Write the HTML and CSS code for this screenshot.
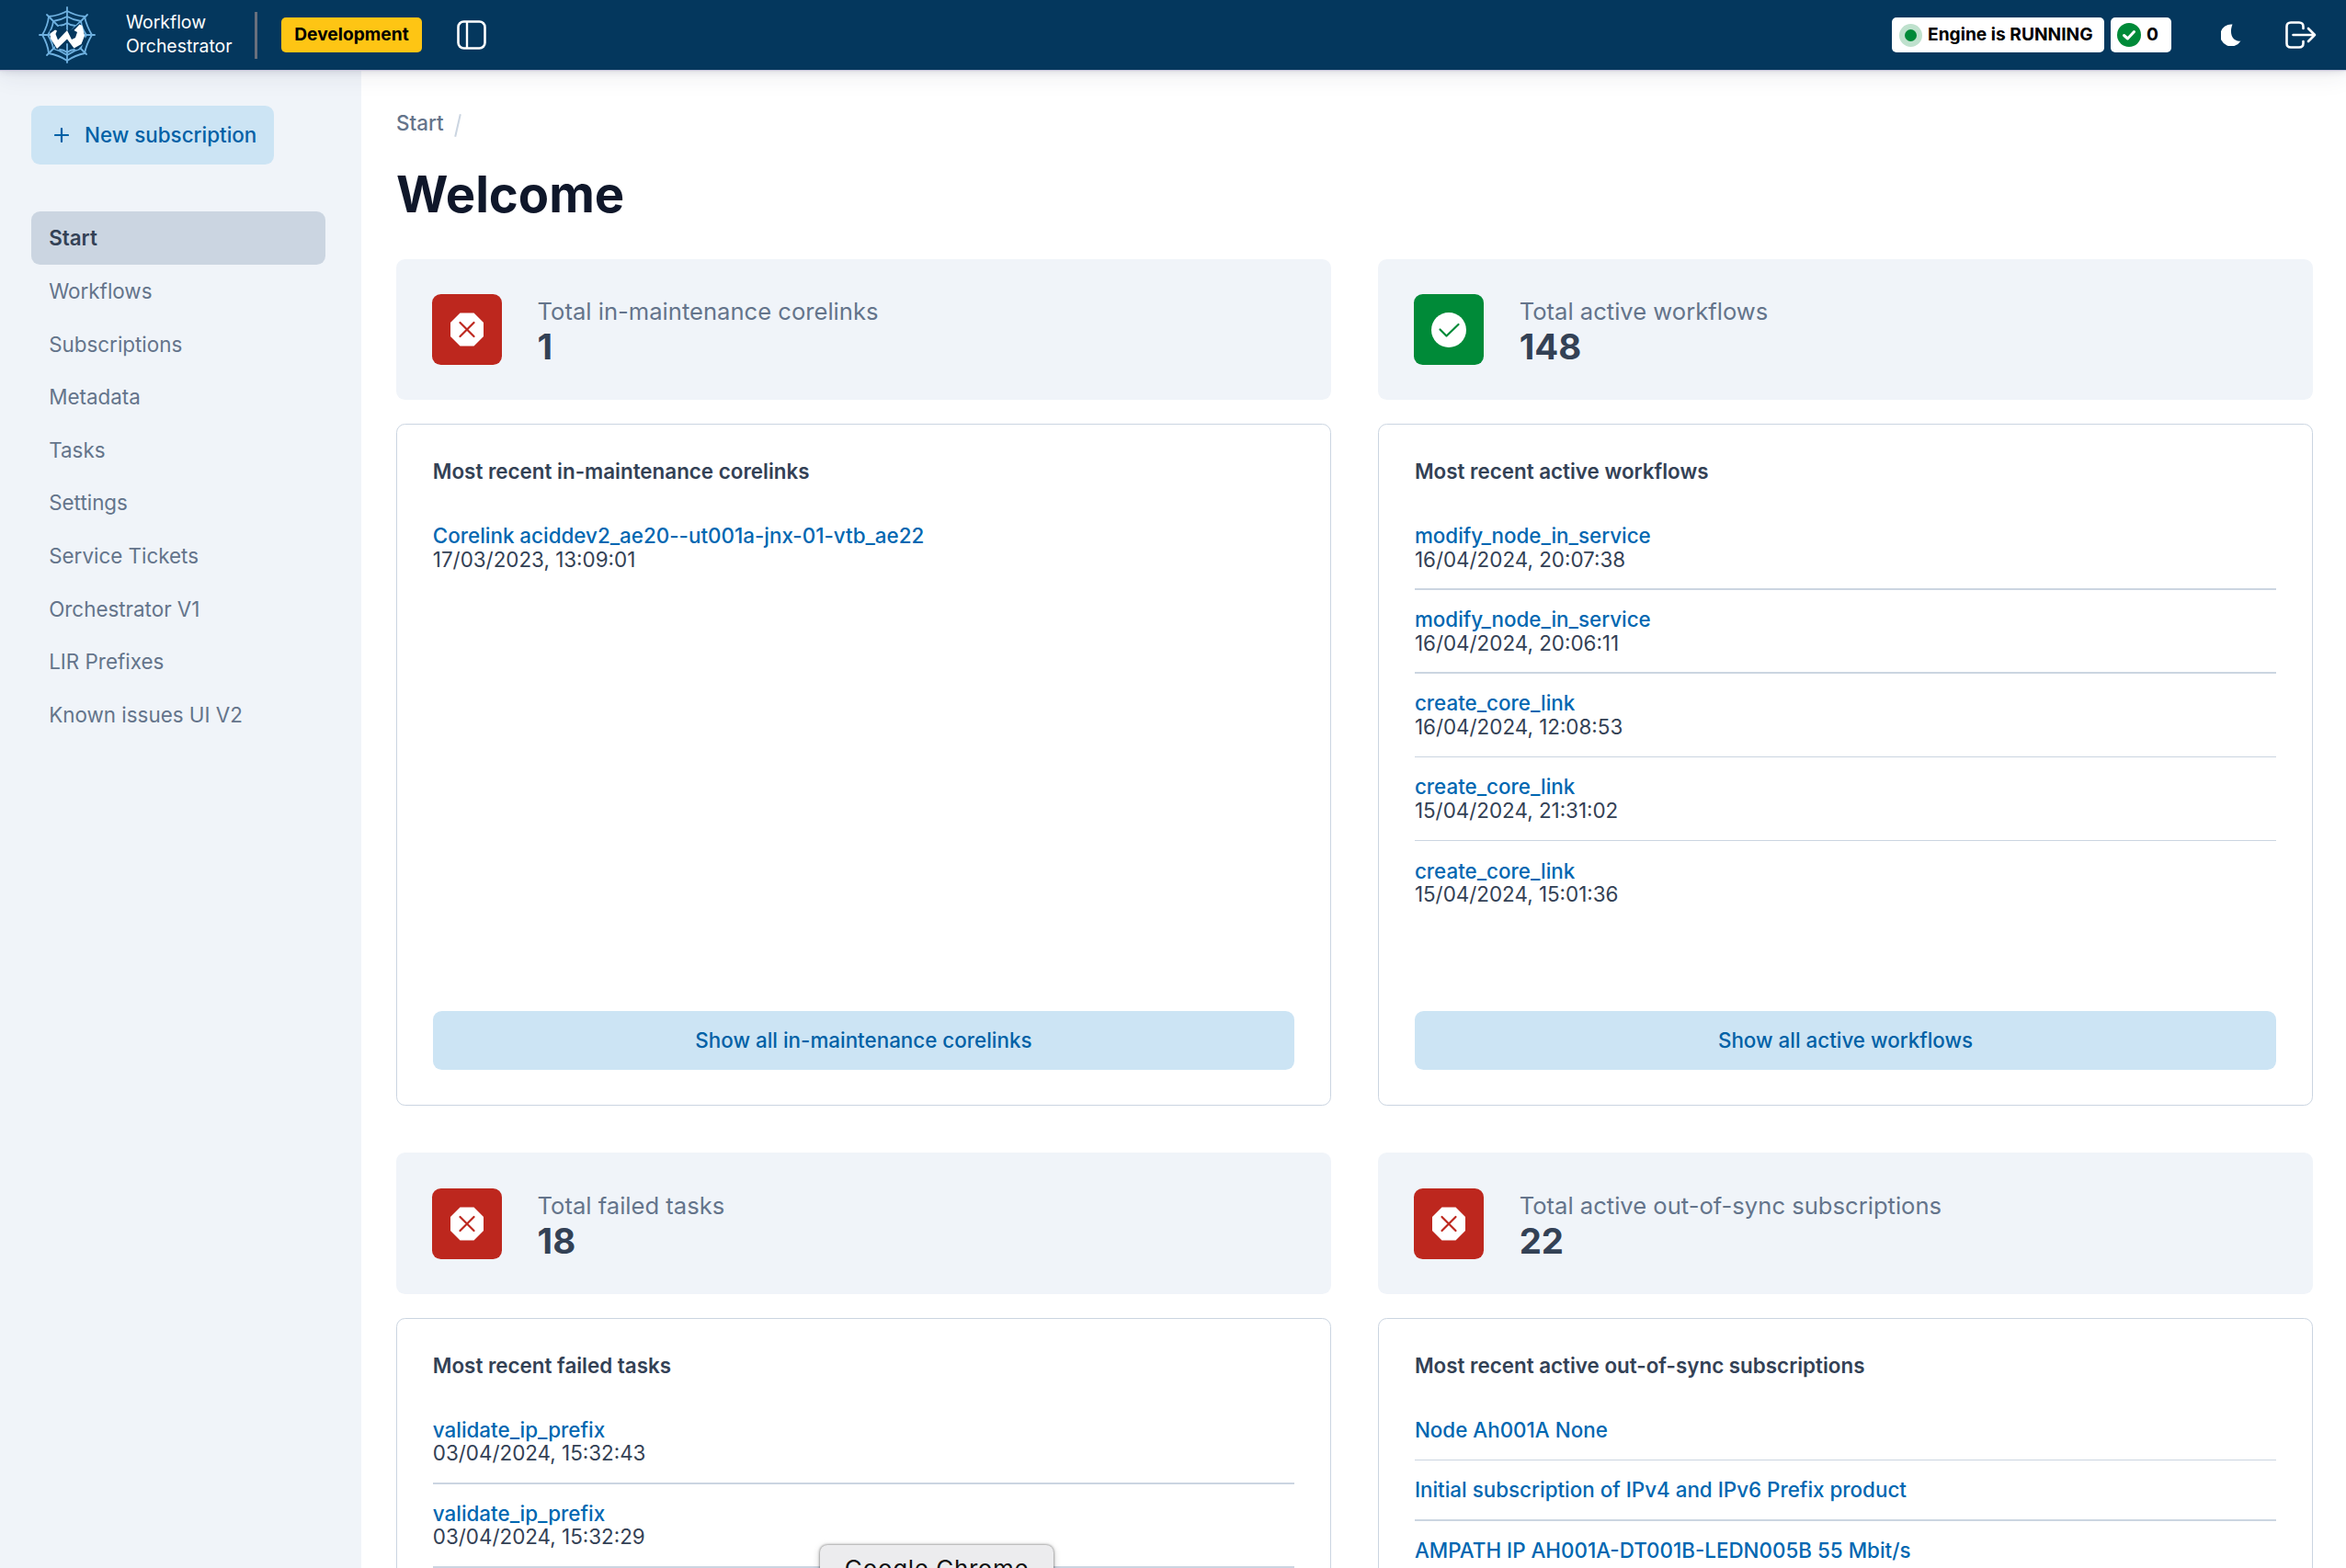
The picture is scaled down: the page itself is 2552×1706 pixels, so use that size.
FILE: index.html
```html
<!DOCTYPE html>
<html lang="en">
<head>
<meta charset="utf-8">
<title>Workflow Orchestrator</title>
<link rel="stylesheet" href="styles.css">
</head>
<body>
<header class="header">
  <svg class="logo" viewBox="0 0 62 62" fill="none" stroke="#6fb1e0" stroke-width="1.8" stroke-linecap="round">
    <path d="M31 1v60M1 31h60M9 9l43 43M53 9L9 53"/>
    <path d="M31 5Q40 10 50 11Q52 21 58 31Q52 41 50 51Q40 53 31 59Q22 53 11 51Q10 41 4 31Q10 21 11 11Q22 10 31 5z"/>
    <path d="M31 11Q38 15 46 16Q47 24 52 31Q47 39 46 46Q38 48 31 53Q24 48 16 46Q15 39 10 31Q15 24 16 16Q24 15 31 11z"/>
    <path d="M31 18q4 3 9 3M31 18q-4 3-9 3M31 50q4-3 8-3M31 50q-4-3-8-3"/>
    <path fill="#04375d" stroke="none" d="M12 27L23 21L33 27L45 18L52 38L42 47L31 40L19 47z"/>
    <path fill="#fff" stroke="none" d="M12.500 29.500L18 25.500L20 26.500L18.500 30L21 36.500L31 26L36 36L40 34L42 28L38.500 26L44.500 19.500L47.500 21L50 32L46.500 41L38.500 45.500L31 35.500L20 46L13 35z"/>
  </svg>
  <div class="brand">Workflow<br>Orchestrator</div>
  <div class="rule"></div>
  <div class="badge env">Development</div>
  <svg class="toggle" viewBox="0 0 32 32" fill="none" stroke="#fff"><rect x="1.500" y="1.500" width="29" height="29" rx="6" stroke-width="2.600"/><path d="M11 2v28" stroke-width="2.400"/></svg>
  <div class="tools">
    <div class="badge engine"><span class="pulse"></span>Engine is RUNNING</div>
    <div class="badge count"><svg viewBox="0 0 26 26"><circle cx="13" cy="13" r="13" fill="#008a38"/><path d="M7.500 13.500l4 3.500 7-7.500" fill="none" stroke="#fff" stroke-width="3" stroke-linecap="round" stroke-linejoin="round"/></svg>0</div>
    <svg class="moon" viewBox="0 0 22 24"><path d="M12.500 0.500A12 12 0 1 0 21.500 18.500C14 20 8 12 12.500 0.500z" fill="#fff"/></svg>
    <svg class="logout" viewBox="0 0 34 30" fill="none" stroke="#fff" stroke-width="2.600" stroke-linecap="round" stroke-linejoin="round"><path d="M19.500 8V6q0-4.500-4.500-4.500H6Q1.500 1.500 1.500 6v18q0 4.500 4.500 4.500h9q4.500 0 4.500-4.500v-2M8.500 15H32M25 8l7 7-7 7"/></svg>
  </div>
</header>
<div class="page">
  <aside class="sidebar">
    <a class="new"><svg viewBox="0 0 16 16" stroke="#0061a6" stroke-width="2.200" stroke-linecap="round"><path d="M8 1v14M1 8h14"/></svg>New subscription</a>
    <nav class="nav">
      <a class="active">Start</a><a>Workflows</a><a>Subscriptions</a><a>Metadata</a><a>Tasks</a><a>Settings</a><a>Service Tickets</a><a>Orchestrator V1</a><a>LIR Prefixes</a><a>Known issues UI V2</a>
    </nav>
  </aside>
  <main class="main">
    <div class="crumbs">Start<span class="slash"></span></div>
    <h1>Welcome</h1>
    <div class="grid">
      <section>
        <div class="stat"><div class="tile red"><svg viewBox="0 0 36 36"><path d="M10.500 0h15L36 10.500v15L25.500 36h-15L0 25.500v-15z" fill="#fff"/><path d="M10.500 10.500l15 15m0-15l-15 15" stroke="#bd271e" stroke-width="2.200" stroke-linecap="round"/></svg></div><div><p>Total in-maintenance corelinks</p><strong>1</strong></div></div>
        <div class="card">
          <h2>Most recent in-maintenance corelinks</h2>
          <ul><li><a>Corelink aciddev2_ae20--ut001a-jnx-01-vtb_ae22</a><time>17/03/2023, 13:09:01</time></li></ul>
          <a class="all">Show all in-maintenance corelinks</a>
        </div>
      </section>
      <section>
        <div class="stat"><div class="tile green"><svg viewBox="0 0 38 38"><circle cx="19" cy="19" r="19" fill="#fff"/><path d="M9.500 18.500l7 7L29.500 13" fill="none" stroke="#008a38" stroke-width="2.200" stroke-linecap="round" stroke-linejoin="round"/></svg></div><div><p>Total active workflows</p><strong>148</strong></div></div>
        <div class="card">
          <h2>Most recent active workflows</h2>
          <ul>
            <li><a>modify_node_in_service</a><time>16/04/2024, 20:07:38</time></li>
            <li><a>modify_node_in_service</a><time>16/04/2024, 20:06:11</time></li>
            <li><a>create_core_link</a><time>16/04/2024, 12:08:53</time></li>
            <li><a>create_core_link</a><time>15/04/2024, 21:31:02</time></li>
            <li><a>create_core_link</a><time>15/04/2024, 15:01:36</time></li>
          </ul>
          <a class="all">Show all active workflows</a>
        </div>
      </section>
      <section>
        <div class="stat"><div class="tile red"><svg viewBox="0 0 36 36"><path d="M10.500 0h15L36 10.500v15L25.500 36h-15L0 25.500v-15z" fill="#fff"/><path d="M10.500 10.500l15 15m0-15l-15 15" stroke="#bd271e" stroke-width="2.200" stroke-linecap="round"/></svg></div><div><p>Total failed tasks</p><strong>18</strong></div></div>
        <div class="card">
          <h2>Most recent failed tasks</h2>
          <ul>
            <li><a>validate_ip_prefix</a><time>03/04/2024, 15:32:43</time></li>
            <li><a>validate_ip_prefix</a><time>03/04/2024, 15:32:29</time></li>
            <li></li>
          </ul>
        </div>
      </section>
      <section>
        <div class="stat"><div class="tile red"><svg viewBox="0 0 36 36"><path d="M10.500 0h15L36 10.500v15L25.500 36h-15L0 25.500v-15z" fill="#fff"/><path d="M10.500 10.500l15 15m0-15l-15 15" stroke="#bd271e" stroke-width="2.200" stroke-linecap="round"/></svg></div><div><p>Total active out-of-sync subscriptions</p><strong>22</strong></div></div>
        <div class="card">
          <h2>Most recent active out-of-sync subscriptions</h2>
          <ul>
            <li><a>Node Ah001A None</a></li>
            <li><a>Initial subscription of IPv4 and IPv6 Prefix product</a></li>
            <li><a>AMPATH IP AH001A-DT001B-LEDN005B 55 Mbit/s</a></li>
          </ul>
        </div>
      </section>
    </div>
  </main>
</div>
<div class="dock-label">Google Chrome</div>
</body>
</html>
```
FILE: styles.css
```css
* { box-sizing: border-box; margin: 0; padding: 0; }
html, body { height: 1706px; overflow: hidden; }
body {
  position: relative;
  display: flex;
  flex-direction: column;
  background: #fff;
  color: #343f52;
  font: 400 22.4px/25.6px Inter, sans-serif;
}
svg { display: block; flex: none; }

.header {
  position: relative;
  z-index: 1;
  flex: none;
  display: flex;
  align-items: center;
  height: 76px;
  padding: 0 32px 0 42px;
  background: #04375d;
  box-shadow: 0 1px 1px #c9c6dc, 0 2px 8px rgba(40, 40, 70, .12), 0 8px 24px rgba(40, 40, 70, .07);
}
.logo { width: 62px; height: 62px; }
.brand { margin-left: 33px; width: 140px; color: #fff; font-size: 19.4px; line-height: 25.6px; }
.rule { width: 3px; height: 51px; background: #69707d; }
.badge {
  display: flex;
  align-items: center;
  height: 38px;
  border-radius: 5px;
  background: #fff;
  color: #000;
  font-size: 19.2px;
  font-weight: 700;
  white-space: nowrap;
}
.env { justify-content: center; width: 153px; margin-left: 26px; background: #fec514; }
.toggle { width: 32px; height: 32px; margin-left: 38px; }
.tools { display: flex; align-items: center; margin-left: auto; }
.engine { width: 231px; padding-left: 8px; gap: 6px; }
.pulse { width: 25px; height: 25px; border: 6px solid #bfe1cd; border-radius: 50%; background: #008a38; }
.count { width: 66px; margin-left: 7px; padding-left: 7px; gap: 6px; }
.count svg { width: 26px; height: 26px; }
.moon { width: 22px; height: 24px; margin-left: 54px; }
.logout { width: 34px; height: 30px; margin-left: 48px; }

.page { flex: 1; display: flex; min-height: 0; overflow: hidden; }
.sidebar { flex: none; width: 393px; padding: 39px 39px 0 34px; background: #f0f4f9; }
.new {
  display: flex;
  align-items: center;
  gap: 17px;
  width: 264px;
  height: 64px;
  padding-left: 25px;
  border-radius: 9.6px;
  background: #cce4f4;
  color: #0061a6;
  font-weight: 500;
}
.new svg { width: 16px; height: 16px; }
.nav { margin-top: 51.4px; }
.nav a { display: block; height: 57.6px; padding-left: 19.2px; border-radius: 9.6px; color: #64748b; line-height: 57.2px; }
.nav .active { background: #cbd5e1; color: #334155; font-weight: 600; }

.main { flex: 1; padding: 43.5px 36px 0 38px; }
.crumbs { display: flex; align-items: center; color: #64748b; font-weight: 500; }
.slash { width: 2px; height: 25px; margin: 4px 0 0 14px; background: #cbd5e1; transform: rotate(13deg); }
h1 { margin-top: 26.6px; color: #0f172a; font-size: 54.4px; font-weight: 700; line-height: 72px; }
.grid { display: grid; grid-template-columns: 1fr 1fr; gap: 51.2px; margin-top: 34.5px; }
.stat { display: flex; gap: 38.4px; height: 153.6px; padding: 38.4px; border-radius: 9.6px; background: #f0f4f9; }
.tile { display: flex; flex: none; justify-content: center; width: 76px; height: 76.8px; margin-left: .8px; padding: 20px 1px 0 0; border-radius: 9.6px; }
.red { background: #bd271e; }
.green { background: #008a38; }
.red svg { width: 36px; height: 37px; }
.green svg { width: 38px; height: 38px; }
.stat p { color: #64748b; font-size: 25.6px; line-height: 38.4px; }
.stat strong { display: block; color: #334155; font-size: 38.4px; font-weight: 700; line-height: 38.4px; }
.card { display: flex; flex-direction: column; height: 742.4px; margin-top: 25.6px; padding: 38.4px 38.8px; border: 1px solid #cbd5e1; border-radius: 9.6px; color: #334155; }
h2 { font-size: 22.4px; font-weight: 600; line-height: 25.6px; }
ul { margin-top: 44.2px; list-style: none; }
li + li::before { content: ""; display: block; height: 1.6px; margin: 19.2px 0; background: #cbd5e1; }
li a { display: block; color: #0067b1; font-weight: 500; }
time { display: block; }
.all { height: 64px; margin-top: auto; border-radius: 9.6px; background: #cce4f4; color: #0061a6; font-weight: 500; line-height: 64px; text-align: center; }

/* label of the dock item floating over the page */
.dock-label {
  position: absolute;
  z-index: 2;
  left: 892px;
  top: 1681px;
  width: 254px;
  height: 44px;
  border-radius: 8px;
  background: #ececee;
  box-shadow: 0 0 3px rgba(0, 0, 0, .6), 0 2px 8px rgba(0, 0, 0, .2);
  color: #111;
  font-size: 26px;
  letter-spacing: .6px;
  line-height: 52px;
  text-align: center;
}
```
